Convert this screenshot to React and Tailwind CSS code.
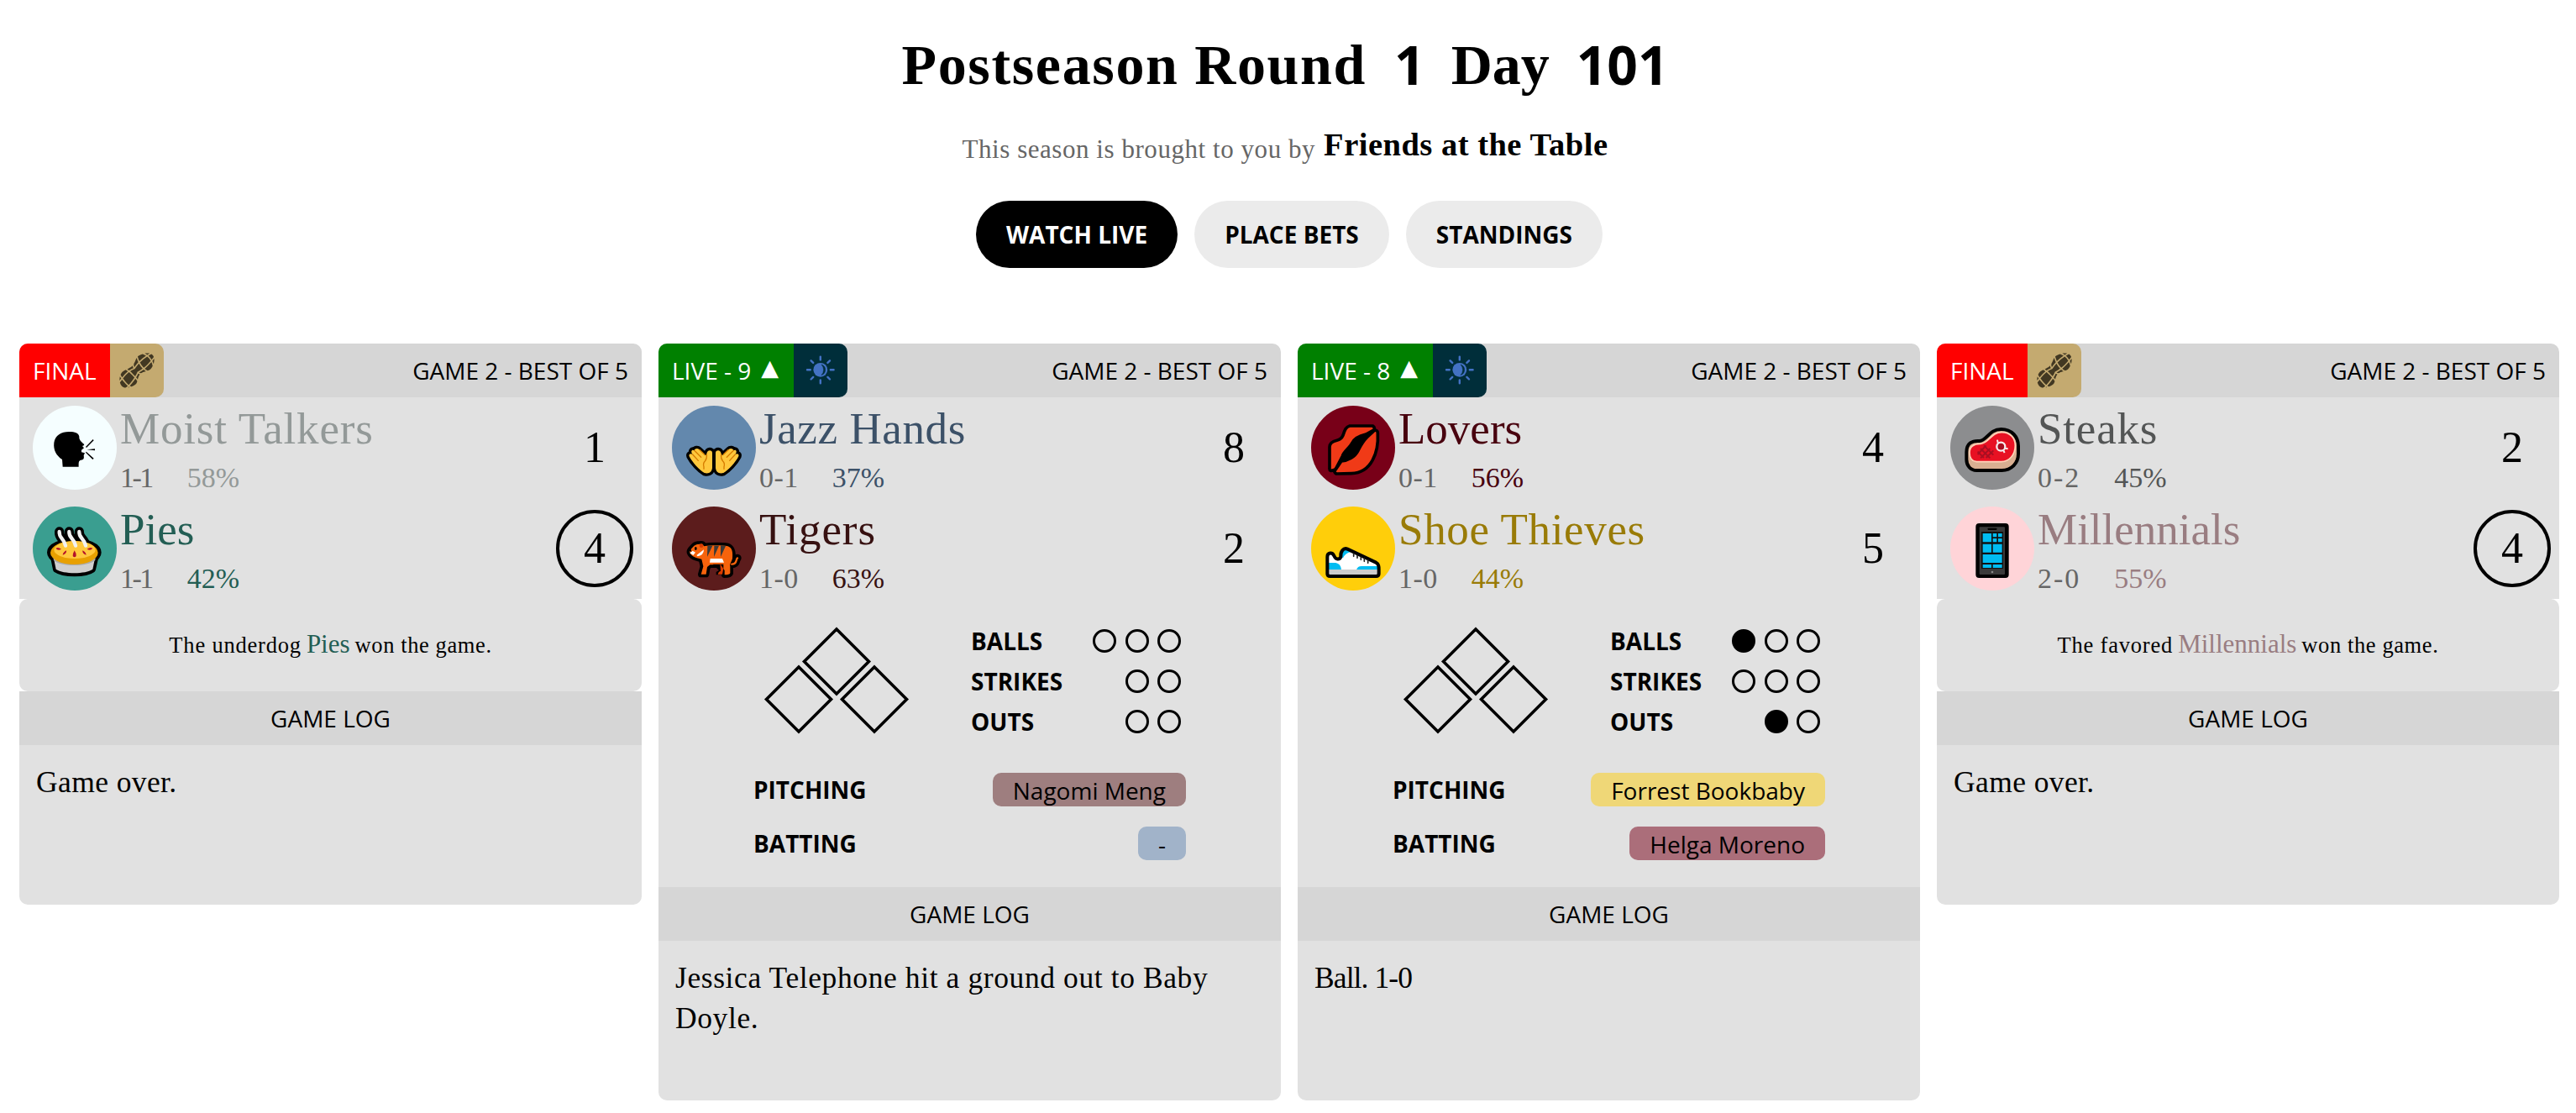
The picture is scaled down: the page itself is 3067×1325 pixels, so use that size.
import { GiPeanut } from "react-icons/gi";

const SANS = "font-['Open_Sans',sans-serif]";
const SERIF = "font-['Liberation_Serif',serif]";

function TalkerIcon() {
  return (
    <g fill="#000">
      <path d="M107 218 L105 192 C84 178 73 158 76 132 C80 104 104 92 132 93 C150 93 164 97 166 110 C165 122 173 128 184 138 Q184 142 177 144 L183 151 L174 158 V166 L186 169 Q184 174 182 177 C184 190 182 193 172 194 C163 196 164 204 164 218 Z" />
      <path d="M189 147 L215 120 L218 124 L192 150 Z M193 157 L222 154 V160 Z M191 164 L218 188 L214 192 L189 167 Z" />
    </g>
  );
}

function PieIcon() {
  const steam = ["M95 90 C93 114 112 112 117 140", "M130 90 C128 114 148 112 153 140", "M166 90 C164 114 184 112 189 140"];
  return (
    <g>
      <g stroke="#000" strokeWidth="24" strokeLinejoin="round" strokeLinecap="round" fill="#000">
        <ellipse cx="148" cy="164" rx="85" ry="38" />
        <path d="M76 185 L84 224 C110 242 188 242 213 224 L222 185 Z" />
        {steam.map((d) => <path key={d} d={d} strokeWidth="34" fill="none" />)}
      </g>
      <path d="M75 185 L83 224 C110 242 188 242 214 224 L222 185 Z" fill="#cfcfcf" />
      <path d="M73 182 C90 208 205 208 224 182 L223 192 C195 216 100 216 75 192 Z" fill="#ababab" />
      <ellipse cx="148" cy="165" rx="85" ry="42" fill="#e8a000" />
      <ellipse cx="150" cy="155" rx="74" ry="31" fill="#ffc83d" />
      <g fill="#b3122a">
        <path d="M82 149 q10 -5 20 3 q-12 8 -20 -3Z M214 149 q-10 -5 -20 3 q12 8 20 -3Z" />
        <path d="M107 173 q2 -11 13 -16 q2 12 -13 16Z M191 173 q-2 -11 -13 -16 q-2 12 13 16Z M143 177 q0 -10 6 -20 q7 10 6 20 q-6 8 -12 0Z" />
      </g>
      {steam.map((d) => <path key={d} d={d} stroke="#f2f2f2" strokeWidth="13" strokeLinecap="round" fill="none" />)}
    </g>
  );
}

function Hand() {
  const d = "M62 181 C59 172 67 169 74 174 C65 162 72 154 80 160 C82 152 92 151 98 157 L116 174 Q123 180 124 172 C126 160 134 157 142 162 Q145 166 144 176 V222 C142 238 132 244 116 240 C98 230 74 204 62 181 Z";
  return (
    <g>
      <path d={d} stroke="#000" strokeWidth="20" strokeLinejoin="round" fill="#000" />
      <path d={d} fill="#ffc83d" />
      <path d="M74 174 L94 196 M80 160 L104 184 M98 157 L116 174 M124 174 Q126 188 118 198 Q110 206 114 218 V226" stroke="#d67d00" strokeWidth="4" fill="none" strokeLinecap="round" />
    </g>
  );
}

function HandsIcon() {
  return (
    <g>
      <Hand />
      <g transform="translate(300 0) scale(-1 1)"><Hand /></g>
    </g>
  );
}

function TigerIcon() {
  const body = "M64 164 C62 158 70 150 78 142 C84 134 96 134 102 134 Q112 132 114 142 C140 138 180 138 200 142 C216 148 218 164 216 186 C212 200 206 204 208 214 L208 238 Q206 244 188 244 V228 L172 208 H136 L126 216 L122 242 H104 L112 214 L106 188 C94 184 70 182 64 164 Z";
  const tail = "M214 206 C234 206 228 186 234 184";
  return (
    <g>
      <path d={body} stroke="#000" strokeWidth="22" strokeLinejoin="round" />
      <path d={tail} stroke="#000" strokeWidth="28" strokeLinecap="round" fill="none" />
      <path d={body} fill="#f7630c" />
      <path d="M146 206 H184 V244 H158 V234 L168 228 Z" fill="#000" />
      <path d="M172 204 L184 222 L180 242 H164 Q166 232 174 230 Z" fill="#d83b01" />
      <path d={tail} stroke="#f7630c" strokeWidth="7" strokeLinecap="round" fill="none" />
      <path d="M127 140 L145 140 L126 180 Z M151 140 L168 140 L150 180 Z M174 139 L192 141 L174 180 Z" fill="#3b3a39" />
      <path d="M137 186 H180 L186 200 H135 Z M64 166 L74 158 L84 164 L76 174 Z M88 174 L114 154 Q114 174 92 178 Z" fill="#fff" />
      <path d="M62 158 L68 152 L70 162 Z" fill="#000" />
      <ellipse cx="85" cy="150" rx="4" ry="6" fill="#000" />
      <circle cx="105" cy="140" r="7" fill="#d83b01" />
    </g>
  );
}

function LipsIcon() {
  return (
    <g stroke="#000" strokeWidth="11" strokeLinejoin="round">
      <path d="M138 72 H220 Q228 76 226 86 L196 102 C170 108 152 120 146 134 C138 150 116 164 112 180 L88 226 Q82 232 70 232 Q65 230 66 222 V148 C66 136 74 128 92 124 Q108 120 114 106 C120 86 124 76 138 72 Z" fill="#f03a17" />
      <path d="M226 88 Q238 86 238 98 C242 166 216 240 144 242 L90 243 Q80 238 86 230 L108 198 C130 196 156 184 168 160 C176 144 182 130 200 112 Z" fill="#f03a17" />
      <path d="M216 94 C180 106 158 114 148 134 C140 148 116 164 112 182 L106 200 C130 196 156 186 168 162 C176 146 182 124 216 94 Z" fill="#000" strokeWidth="2" />
    </g>
  );
}

function ShoeIcon() {
  const d = "M58 180 C58 164 76 162 82 176 C88 192 102 190 106 180 C104 160 116 146 130 152 L230 199 C242 206 242 214 242 224 V240 Q242 249 232 249 H68 Q58 249 58 240 Z";
  return (
    <g>
      <path d={d} fill="#fff" />
      <path d="M60 201 H88 Q106 204 108 226 H60 Z M108 180 Q110 156 126 155 L142 162 Q122 166 114 184 Z M162 226 Q166 213 180 213 H238 V226 Z" fill="#00bcf2" />
      <path d="M60 225 H240 V243 H60 Z" fill="#ccc" />
      <path d="M60 243 H240 V248 H60 Z" fill="#333" />
      <path d={d} fill="none" stroke="#000" strokeWidth="12" strokeLinejoin="round" />
      <path d="M152 168 V178 M165 174 V184 M178 180 V190 M190 185 V196 M203 191 V202" stroke="#222" strokeWidth="5" strokeLinecap="round" />
    </g>
  );
}

function SteakIcon() {
  return (
    <g>
      <path d="M58 166 C58 134 78 124 104 126 C132 124 138 84 182 84 C220 84 243 112 243 144 V172 C243 206 218 231 184 231 H94 C72 231 58 214 58 192 Z" fill="#d9af91" stroke="#000" strokeWidth="12" />
      <path d="M69 168 C69 144 86 136 108 136 C140 134 144 95 184 95 C214 95 232 116 232 142 C232 176 210 200 182 200 H94 C76 198 69 184 69 168 Z" fill="#e81123" stroke="#ffd2b8" strokeWidth="5" />
      <path d="M98 164 L120 186 M108 153 L142 187 M120 142 L154 176 M154 160 L128 186 M142 153 L108 187 M128 142 L98 174" stroke="#a80f22" strokeWidth="6" />
      <circle cx="181" cy="146" r="15" fill="#a80f22" stroke="#f6ecec" strokeWidth="7" />
      <path d="M170 132 L168 122 M196 152 L206 154 M190 160 L194 168" stroke="#f6ecec" strokeWidth="6" />
    </g>
  );
}

function PhoneIcon() {
  return (
    <g>
      <rect x="91" y="60" width="118" height="195" rx="12" fill="#000" />
      <rect x="104" y="73" width="91" height="170" rx="3" fill="#3a3a3a" />
      <rect x="111" y="90" width="78" height="132" fill="#111" />
      <rect x="134" y="77" width="32" height="7" rx="2" fill="#000" />
      <path d="M116 96h31v31h-31z M152 96h14v13h-14z M171 96h14v13h-14z M152 114h14v13h-14z M171 114h14v13h-14z M116 134h31v30h-31z M152 134h33v30h-33z M116 171h69v30h-69z M116 207h31v12h-31z M152 207h33v12h-33z" fill="#00bcf2" />
      <circle cx="150" cy="234" r="4" fill="#8a8a8a" />
    </g>
  );
}

function SunIcon() {
  return (
    <svg viewBox="0 0 64 64" className="size-16" aria-hidden="true">
      <circle cx="31.8" cy="31.3" r="8.4" fill="#4372c4" />
      <path d="M33 25 A6.6 6.6 0 0 1 33 37.600 A9 9 0 0 0 33 25 Z" fill="#002e3a" stroke="#002e3a" strokeWidth="0.5" />
      <g stroke="#4372c4" strokeWidth="2.4" strokeLinecap="round">
        <path d="M31.8 15.6 V19.4 M31.8 43.4 V47.2 M16 31.3 H19.8 M43.8 31.3 H47.6 M20.6 20.3 L23.2 22.9 M40.4 39.9 L43 42.5 M43 20.3 L40.4 22.9 M23.2 39.9 L20.6 42.5" />
      </g>
    </svg>
  );
}

const GAMES = [
  {
    final: true,
    status: "FINAL",
    away: { name: "Moist Talkers", nameCls: "tracking-[0.8px]", rec: "1-1", recCls: "tracking-[-2.5px] mr-[2px]", pct: "58%", score: 1, color: "text-[#939998]", bg: "bg-[#f5feff]", Icon: TalkerIcon },
    home: { name: "Pies", nameCls: "", rec: "1-1", recCls: "tracking-[-2.5px] mr-[2px]", pct: "42%", score: 4, color: "text-[#235e54]", bg: "bg-[#3a9e90]", Icon: PieIcon, won: true },
    outcome: ["The underdog", "Pies", "won the game."],
    log: "Game over.",
    logCls: "tracking-[0.4px]",
  },
  {
    status: "LIVE - 9",
    away: { name: "Jazz Hands", nameCls: "tracking-[0.6px]", rec: "0-1", recCls: "tracking-[0.5px]", pct: "37%", score: 8, color: "text-[#3c5168]", bg: "bg-[#6388ad]", Icon: HandsIcon },
    home: { name: "Tigers", nameCls: "tracking-[0.9px]", rec: "1-0", recCls: "tracking-[0.5px]", pct: "63%", score: 2, color: "text-[#371111]", bg: "bg-[#5c1c1c]", Icon: TigerIcon },
    balls: [0, 3], strikes: [0, 2], outs: [0, 2],
    pitcher: "Nagomi Meng", pitcherBg: "bg-[#9e7e7f]",
    batter: "-", batterBg: "bg-[#a1b3c9]",
    log: "Jessica Telephone hit a ground out to Baby Doyle.",
    logCls: "tracking-[0.6px]",
  },
  {
    status: "LIVE - 8",
    away: { name: "Lovers", nameCls: "", rec: "0-1", recCls: "tracking-[0.5px]", pct: "56%", score: 4, color: "text-[#48000e]", bg: "bg-[#780018]", Icon: LipsIcon },
    home: { name: "Shoe Thieves", nameCls: "tracking-[0.65px]", rec: "1-0", recCls: "tracking-[0.5px]", pct: "44%", score: 5, color: "text-[#997b07]", bg: "bg-[#ffce0a]", Icon: ShoeIcon },
    balls: [1, 3], strikes: [0, 3], outs: [1, 2],
    pitcher: "Forrest Bookbaby", pitcherBg: "bg-[#efd777]",
    batter: "Helga Moreno", batterBg: "bg-[#ab6e7a]",
    log: "Ball. 1-0",
    logCls: "tracking-[-0.9px]",
  },
  {
    final: true,
    status: "FINAL",
    away: { name: "Steaks", nameCls: "tracking-[0.8px]", rec: "0-2", recCls: "tracking-[2px]", pct: "45%", score: 2, color: "text-[#535555]", bg: "bg-[#8c8d8f]", Icon: SteakIcon },
    home: { name: "Millennials", nameCls: "", rec: "2-0", recCls: "tracking-[2px]", pct: "55%", score: 4, color: "text-[#997d81]", bg: "bg-[#ffd4d8]", Icon: PhoneIcon, won: true },
    outcome: ["The favored", "Millennials", "won the game."],
    log: "Game over.",
    logCls: "tracking-[0.4px]",
  },
];

function TeamRow({ team }) {
  const { Icon } = team;
  return (
    <div className="flex h-[120px] items-center pl-4 pr-[10px]">
      <div className={`size-[100px] shrink-0 overflow-hidden rounded-full ${team.bg}`}>
        <svg viewBox="0 0 300 300" className="size-full" aria-hidden="true"><Icon /></svg>
      </div>
      <div className={`ml-1 flex h-full flex-1 flex-col whitespace-nowrap pt-3 ${SERIF}`}>
        <div className={`text-[53px] leading-[50px] ${team.color} ${team.nameCls}`}>{team.name}</div>
        <div className="mt-[10px] flex gap-10 text-[34px] leading-[48px]">
          <span className={`text-[#666] ${team.recCls}`}>{team.rec}</span>
          <span className={team.color}>{team.pct}</span>
        </div>
      </div>
      <div className={`flex size-[92px] items-center justify-center rounded-full border-4 text-[52px] leading-[84px] ${SERIF} ${team.won ? "border-black" : "border-transparent"}`}>
        {team.score}
      </div>
    </div>
  );
}

function Count({ label, value: [on, total] }) {
  return (
    <div className="flex h-12 items-center justify-between">
      <span>{label}</span>
      <div className="flex gap-[10.5px]">
        {Array.from({ length: total }, (_, i) => (
          <span key={i} className={`size-7 rounded-full border-[3px] border-black ${i < on ? "bg-black" : ""}`} />
        ))}
      </div>
    </div>
  );
}

function Player({ label, name, bg }) {
  return (
    <div className="flex h-10 items-center justify-between">
      <span className="font-bold">{label}</span>
      <span className={`h-10 rounded-[10px] px-6 leading-[42px] ${bg}`}>{name}</span>
    </div>
  );
}

function LiveState({ game }) {
  return (
    <div className={`h-[343px] bg-[#e1e1e1] pl-[113px] pr-[113px] pt-[26px] text-[28px] ${SANS}`}>
      <div className="flex justify-between">
        <svg viewBox="0 0 180 136" className="ml-[9px] mt-[4px] h-[136px] w-[180px]" fill="none" stroke="#000" strokeWidth="3.6" aria-hidden="true">
          <path d="M90 6 L128.500 44.500 L90 83 L51.500 44.500 Z M45 51 L83.500 89.500 L45 128 L6.500 89.500 Z M135 51 L173.500 89.500 L135 128 L96.500 89.500 Z" />
        </svg>
        <div className="mr-[6px] w-[250px] font-bold">
          <Count label="BALLS" value={game.balls} />
          <Count label="STRIKES" value={game.strikes} />
          <Count label="OUTS" value={game.outs} />
        </div>
      </div>
      <div className="mt-[37px] flex flex-col gap-6">
        <Player label="PITCHING" name={game.pitcher} bg={game.pitcherBg} />
        <Player label="BATTING" name={game.batter} bg={game.batterBg} />
      </div>
    </div>
  );
}

function Outcome({ parts, color }) {
  return (
    <div className={`flex h-[110px] items-baseline justify-center rounded-[10px] bg-[#e1e1e1] pt-[34px] text-[26.5px] leading-[40px] ${SERIF}`}>
      <span className="tracking-[0.8px]">{parts[0]}</span>
      <span className={`mx-[6px] text-[31px] ${color}`}>{parts[1]}</span>
      <span className="tracking-[0.6px]">{parts[2]}</span>
    </div>
  );
}

function GameCard({ game }) {
  return (
    <article className="flex flex-col">
      <header className={`flex h-16 items-center overflow-hidden rounded-t-[10px] bg-[#d6d6d6] text-[28px] leading-[64px] ${SANS}`}>
        {game.final ? (
          <div className="h-16 bg-[#ff0000] px-4 text-white">{game.status}</div>
        ) : (
          <div className="flex h-16 w-[161px] justify-between bg-[#008000] pl-4 pr-[18px] text-white">
            <span>{game.status}</span>
            <span className="-mt-[3px] font-['DejaVu_Sans',sans-serif] text-[27px]">▲</span>
          </div>
        )}
        <div className={`flex size-16 items-center justify-center rounded-r-[10px] ${game.final ? "bg-[#c4aa70] text-[#423822]" : "bg-[#002e3a]"}`}>
          {game.final ? <GiPeanut className="size-[46px]" /> : <SunIcon />}
        </div>
        <div className="ml-auto pr-4">GAME 2 - BEST OF 5</div>
      </header>
      <div className="bg-[#e1e1e1]">
        <TeamRow team={game.away} />
        <TeamRow team={game.home} />
      </div>
      {game.final ? <Outcome parts={game.outcome} color={game.home.color} /> : <LiveState game={game} />}
      <div className={`h-16 bg-[#d6d6d6] text-center text-[28px] leading-[64px] ${SANS}`}>GAME LOG</div>
      <div className={`h-[190px] rounded-b-[10px] bg-[#e1e1e1] p-5 text-[35.5px] leading-[48px] ${SERIF} ${game.logCls}`}>{game.log}</div>
    </article>
  );
}

export default function App() {
  return (
    <div className="h-[1325px] w-[3067px] overflow-hidden bg-white text-black">
      <div className={`flex items-center justify-center pr-[7px] pt-[29px] font-bold ${SERIF} text-[68px] leading-[96px]`}>
        <span className="tracking-[1.65px]">Postseason Round</span>
        <span className={`ml-[33px] mr-[31px] text-[64px] ${SANS}`}>1</span>
        <span>Day</span>
        <span className={`ml-[32px] text-[64px] ${SANS}`}>101</span>
      </div>
      <div className={`mt-[27px] flex h-[46px] justify-center pr-[7px] leading-[40px] ${SERIF}`}>
        <span className="mt-[6px] text-[31px] tracking-[0.55px] text-[#666]">This season is brought to you by</span>
        <span className="ml-[10px] text-[38.5px] font-bold tracking-[0.5px]">Friends at the Table</span>
      </div>
      <nav className={`mt-[41px] flex justify-center gap-5 pl-[3px] text-[28px] font-bold leading-[80px] ${SANS}`}>
        <a className="rounded-full bg-black px-9 text-white">WATCH LIVE</a>
        <a className="rounded-full bg-[#ebebeb] px-9">PLACE BETS</a>
        <a className="rounded-full bg-[#ebebeb] px-9">STANDINGS</a>
      </nav>
      <main className="mt-[90px] grid grid-cols-4 items-start gap-5 pl-[23px] pr-5">
        {GAMES.map((game, i) => <GameCard key={i} game={game} />)}
      </main>
    </div>
  );
}
